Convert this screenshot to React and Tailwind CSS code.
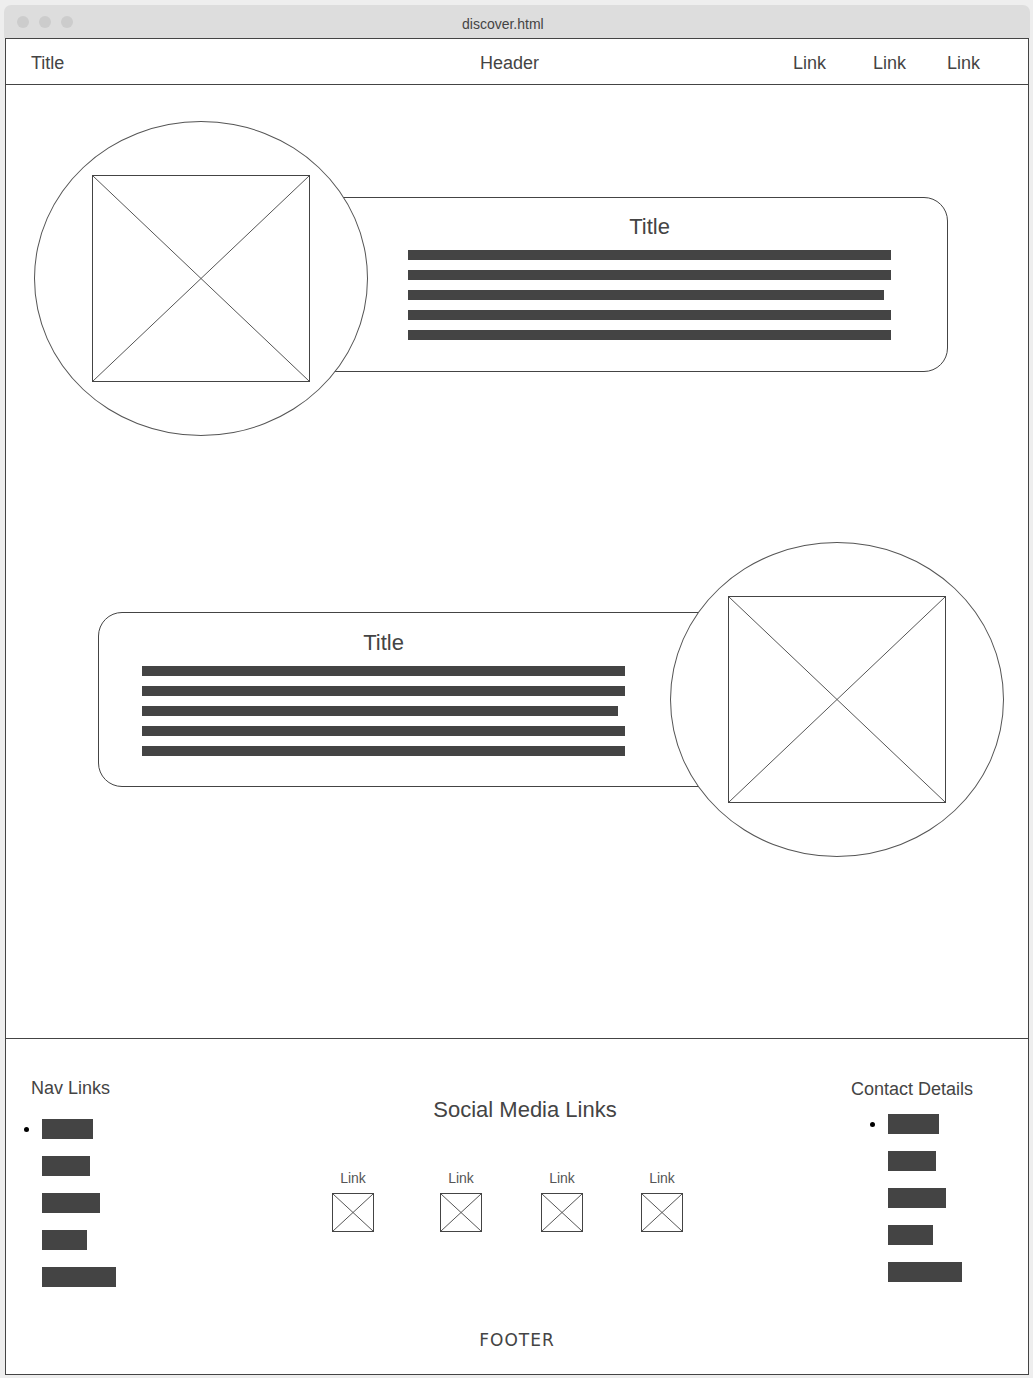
const bar = "bg-[#444444]";

function CrossBox({ className }) {
  return (
    <div className={`border border-[#444444] bg-white ${className}`}>
      <svg className="block h-full w-full" viewBox="0 0 100 100" preserveAspectRatio="none">
        <line x1="0" y1="0" x2="100" y2="100" stroke="#555555" strokeWidth="1" vectorEffect="non-scaling-stroke" />
        <line x1="100" y1="0" x2="0" y2="100" stroke="#555555" strokeWidth="1" vectorEffect="non-scaling-stroke" />
      </svg>
    </div>
  );
}

function Bubble() {
  return (
    <div className="relative z-10 flex h-[315px] w-[334px] shrink-0 items-center justify-center rounded-[50%] border border-[#555555] bg-white">
      <CrossBox className="h-[207px] w-[218px]" />
    </div>
  );
}

function Lines() {
  return (
    <div className="flex w-[483px] flex-col gap-[10px]">
      <div className="mb-[1px] text-center text-[22px] leading-[24px] text-[#444444]">Title</div>
      <div className={`h-[10px] w-[483px] ${bar}`} />
      <div className={`h-[10px] w-[483px] ${bar}`} />
      <div className={`h-[10px] w-[476px] ${bar}`} />
      <div className={`h-[10px] w-[483px] ${bar}`} />
      <div className={`h-[10px] w-[483px] ${bar}`} />
    </div>
  );
}

function BulletList() {
  const widths = ["w-[51px]", "w-[48px]", "w-[58px]", "w-[45px]", "w-[74px]"];
  return (
    <ul className="flex flex-col gap-[17px]">
      {widths.map((w, i) => (
        <li key={i} className="flex items-center">
          <span className="flex w-[18px] shrink-0 items-center">
            {i === 0 && <span className="h-[5px] w-[5px] rounded-full bg-black" />}
          </span>
          <span className={`h-[20px] ${w} ${bar}`} />
        </li>
      ))}
    </ul>
  );
}

export default function App() {
  const social = ["ml-[32px]", "ml-[66px]", "ml-[59px]", "ml-[58px]"];

  return (
    <div className="min-h-[1378px] w-[1033px] bg-[#eeeeee] pl-[4px] pr-[3px] pt-[5px] pb-[3px] font-['Liberation_Sans',Arial,sans-serif]">
      {/* window chrome */}
      <div className="flex h-[33px] items-center rounded-t-[7px] bg-[#dddddd] pl-[13px]">
        <div className="flex gap-[10px]">
          <span className="h-[12px] w-[12px] rounded-full bg-[#cccccc]" />
          <span className="h-[12px] w-[12px] rounded-full bg-[#cccccc]" />
          <span className="h-[12px] w-[12px] rounded-full bg-[#cccccc]" />
        </div>
        <span className="ml-[389px] pt-[6px] text-[14px] text-[#444444]">discover.html</span>
      </div>

      <div className="mx-[1px] border border-[#444444] bg-white">
        {/* header */}
        <header className="flex h-[46px] items-center border-b border-[#444444] pl-[25px] pt-[3px] text-[18px] text-[#444444]">
          <span className="w-[449px]">Title</span>
          <span className="w-[313px]">Header</span>
          <span className="w-[80px]">Link</span>
          <span className="w-[74px]">Link</span>
          <span>Link</span>
        </header>

        {/* main */}
        <main className="h-[953px] pt-[36px]">
          <div className="flex items-start pl-[28px]">
            <Bubble />
            <div className="ml-[-42px] mt-[76px] flex h-[175px] w-[622px] rounded-r-[24px] border border-[#444444] pl-[81px] pt-[17px]">
              <Lines />
            </div>
          </div>

          <div className="mt-[106px] flex items-start pl-[92px]">
            <div className="mt-[70px] flex h-[175px] w-[602px] rounded-l-[24px] border border-[#444444] pl-[43px] pt-[18px]">
              <Lines />
            </div>
            <div className="ml-[-30px]">
              <Bubble />
            </div>
          </div>
        </main>

        {/* footer */}
        <footer className="border-t border-[#444444] text-[#444444]">
          <div className="flex h-[271px]">
            <div className="w-[294px] pt-[39px]">
              <div className="pl-[25px] text-[18px] leading-[21px]">Nav Links</div>
              <div className="ml-[18px] mt-[20px]">
                <BulletList />
              </div>
            </div>

            <div className="w-[450px] pt-[59px]">
              <div className="text-center text-[22px] leading-[24px]">Social Media Links</div>
              <div className="mt-[48px] flex">
                {social.map((m, i) => (
                  <div key={i} className={`flex w-[42px] flex-col items-center ${m}`}>
                    <span className="text-[14px] leading-[16px] text-[#555555]">Link</span>
                    <CrossBox className="mt-[7px] h-[39px] w-[42px]" />
                  </div>
                ))}
              </div>
            </div>

            <div className="flex-1 pl-[101px] pt-[40px]">
              <div className="text-[18px] leading-[21px]">Contact Details</div>
              <div className="ml-[19px] mt-[14px]">
                <BulletList />
              </div>
            </div>
          </div>
          <div className="mt-[20px] pb-[24px] text-center font-['DejaVu_Sans',sans-serif] text-[17px] leading-[20px] tracking-[1px]">
            FOOTER
          </div>
        </footer>
      </div>
    </div>
  );
}
